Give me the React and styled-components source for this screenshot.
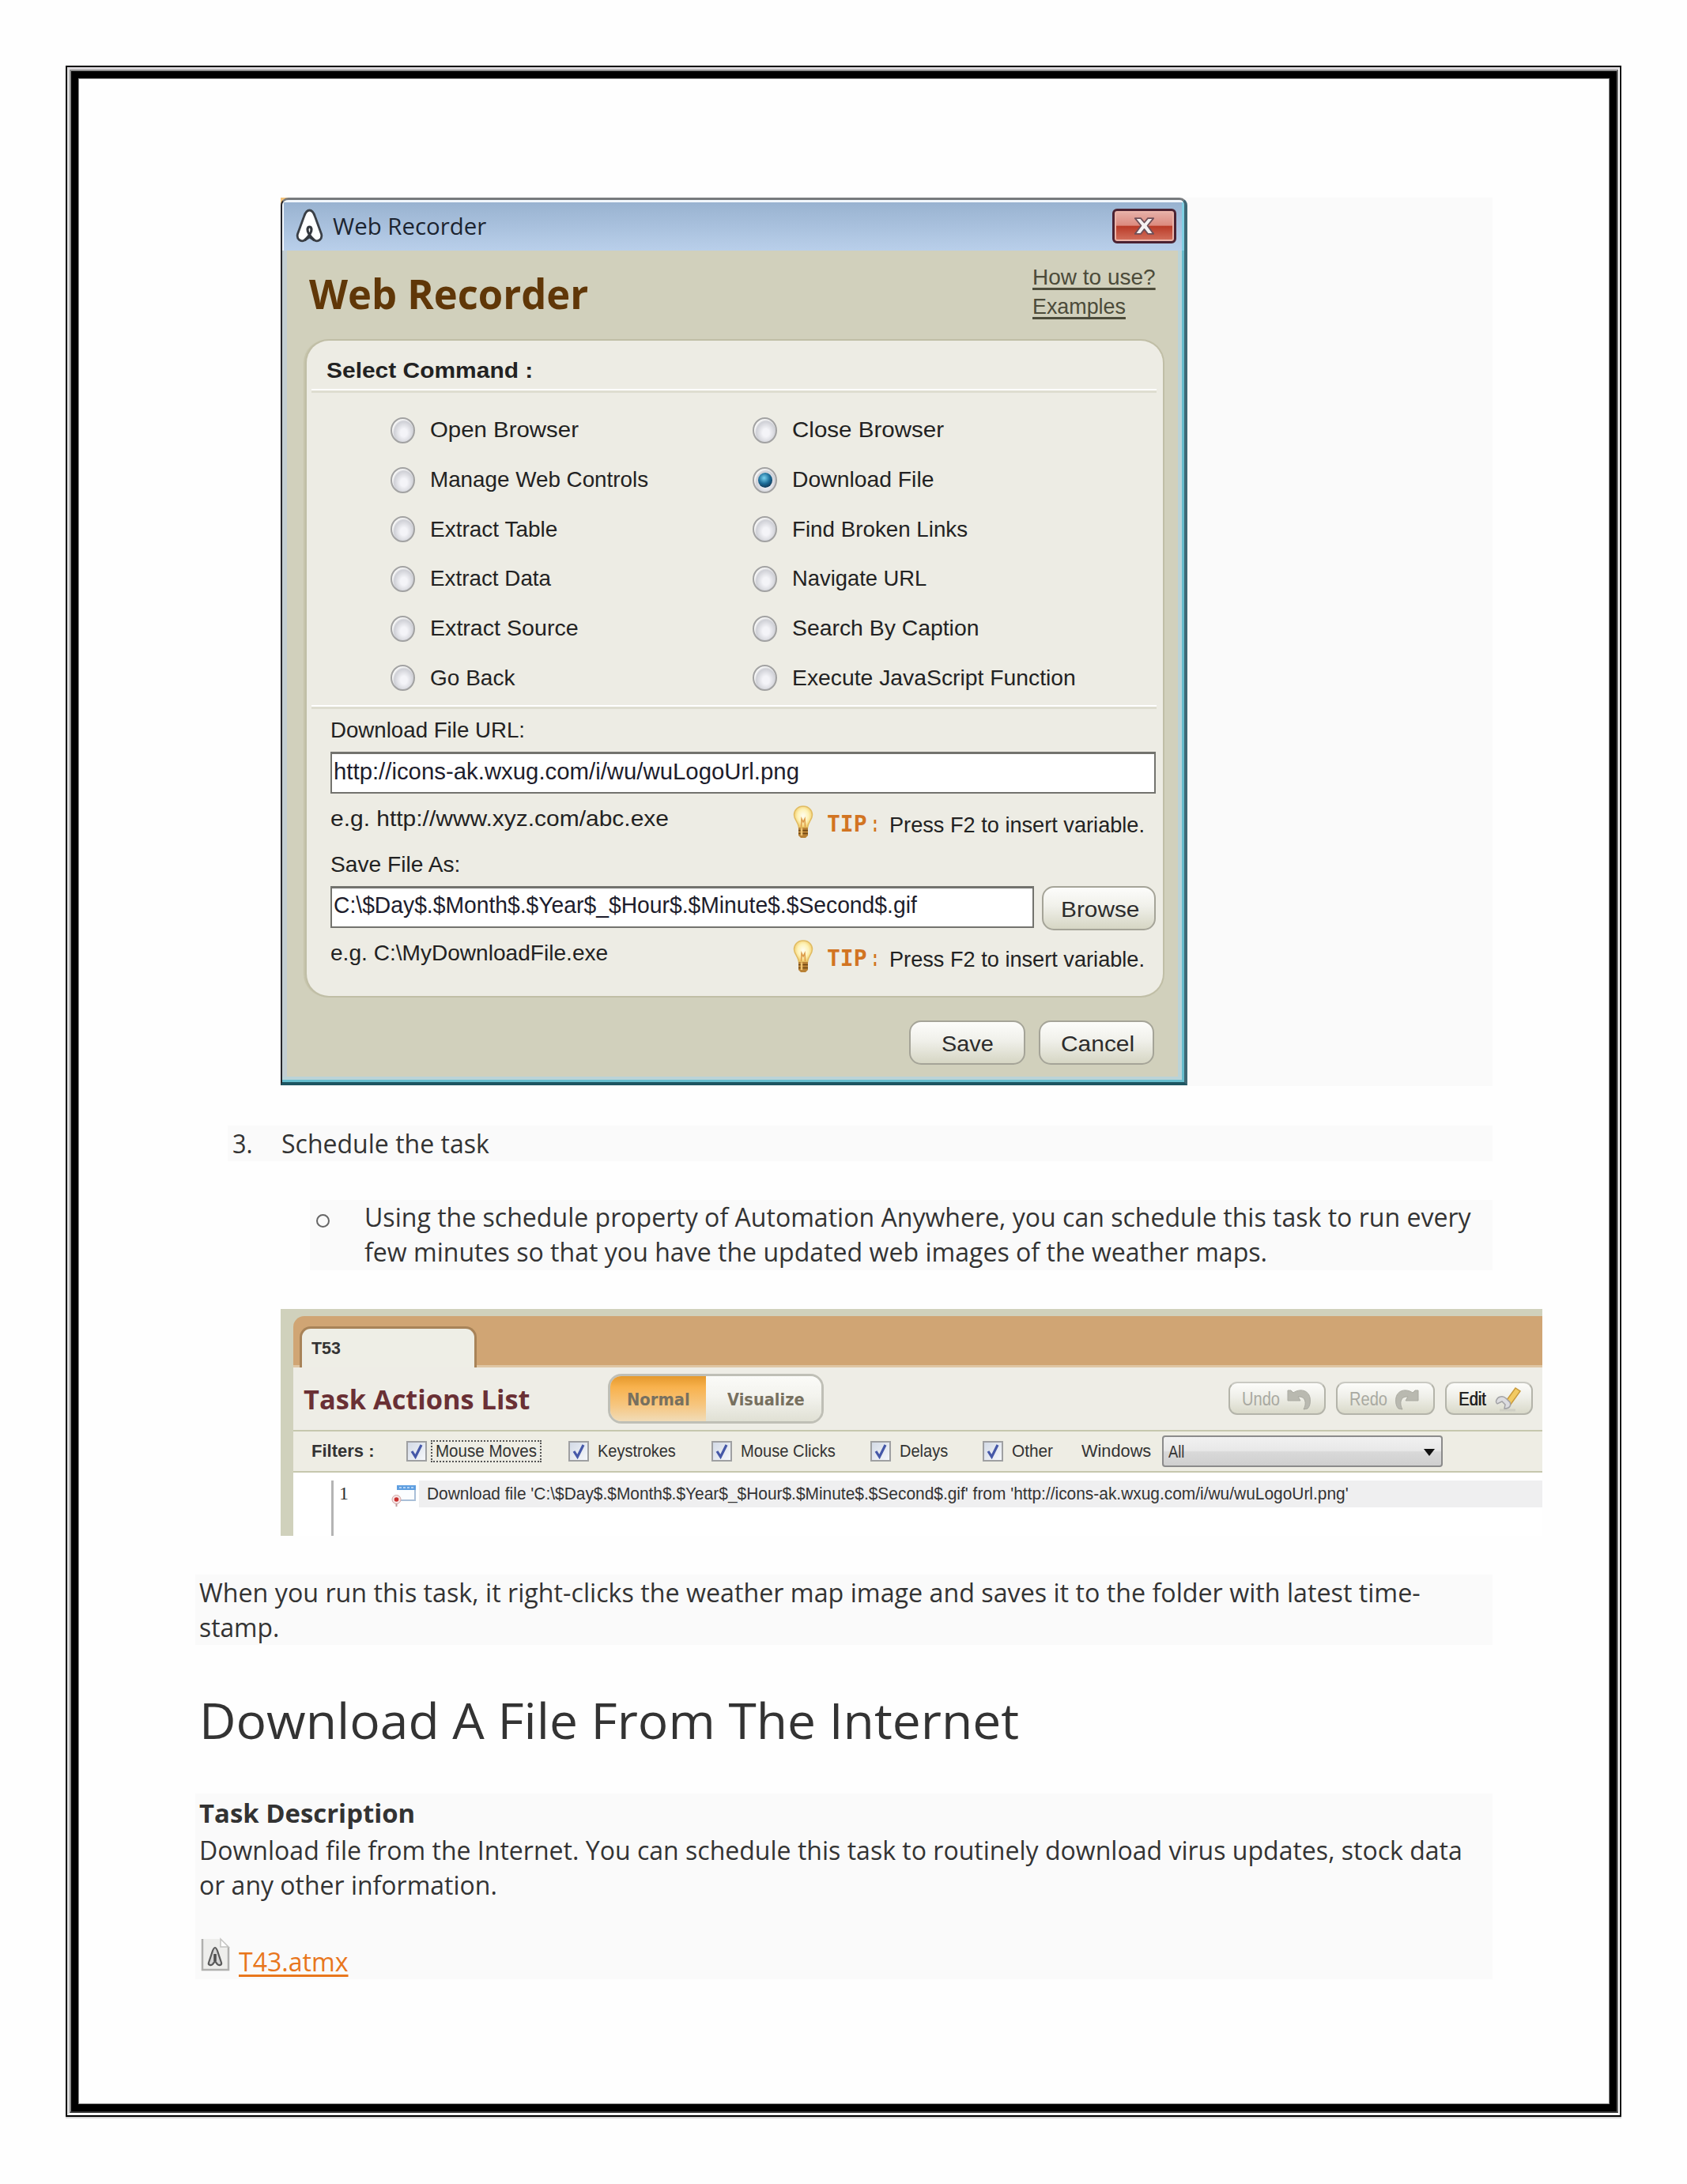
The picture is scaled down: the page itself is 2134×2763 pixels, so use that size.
import React, { useLayoutEffect, useRef, useState } from "react";
import styled, { createGlobalStyle, css } from "styled-components";

const SANS = `"Liberation Sans", Arial, sans-serif`;
const HUMANIST = `"Open Sans", "Noto Sans", sans-serif`;

const Global = createGlobalStyle`
  * { box-sizing: border-box; }
  body { margin: 0; background: #fefefe; }
`;

/* ---------- text that is condensed or widened to a set measure ---------- */

const Measure = styled.span`
  display: block;
  flex: none;
  width: ${(p) => p.$w}px;
  white-space: nowrap;
`;
const Run = styled.span`
  display: inline-block;
  transform-origin: 0 50%;
  ${(p) =>
    p.$underline &&
    css`
      text-decoration: underline;
      text-decoration-thickness: 2.5px;
      text-decoration-skip-ink: none;
      text-underline-offset: 4px;
    `}
`;

function Fit({ w, underline, children }) {
  const ref = useRef(null);
  const [scale, setScale] = useState(1);
  useLayoutEffect(() => {
    setScale(w / ref.current.offsetWidth);
  }, [w, children]);
  return (
    <Measure $w={w}>
      <Run ref={ref} $underline={underline} style={{ transform: `scaleX(${scale})` }}>
        {children}
      </Run>
    </Measure>
  );
}

/* ---------- page ---------- */

const Sheet = styled.div`
  width: 2134px;
  height: 2763px;
  padding: 83px 83px 84px;
  background: #fefefe;
`;
const OuterRule = styled.div`
  height: 2595px;
  border: 2px solid #111;
  border-bottom-color: #000;
  box-shadow: 0 2px 0 #d5d5d5;
`;
const RuleGap = styled.div`
  height: 100%;
  border-style: solid;
  border-width: 3px 2px 3px 3px;
  border-color: #dcd8dc #fff #fff #dedede;
`;
const InnerRule = styled.main`
  height: 100%;
  border: 2px solid #8c8c8c;
  border-right-color: #666;
  border-bottom-color: #333;
  box-shadow: inset 0 0 0 9px #000, inset 0 0 0 10px #8a8a8a;
  padding-top: 160px;
  display: flex;
  flex-direction: column;
  align-items: flex-start;
  font: 33px/44px ${HUMANIST};
  color: #333;
`;

const FigureBand = styled.section`
  width: 1533px;
  height: 1124px;
  margin-left: 265px;
  background: linear-gradient(#f3c27a, #f3c27a) 0 0 / 12px 12px no-repeat #fafafa;
`;
const ListRow = styled.div`
  display: flex;
  width: 1600px;
  height: 45px;
  margin: 50px 0 0 198px;
  padding: 1px 0 0 6px;
  gap: 36px;
  background: #fafafa;
`;
const SubItem = styled.div`
  display: flex;
  width: 1496px;
  height: 89px;
  margin: 49px 0 0 302px;
  padding-left: 8px;
  gap: 44px;
  background: #fafafa;
`;
const Ring = styled.span`
  width: 17px;
  height: 17px;
  margin-top: 18px;
  border: 2px solid #666;
  border-radius: 50%;
`;
const Paragraph = styled.div`
  width: 1641px;
  height: ${(p) => p.$h}px;
  margin: ${(p) => p.$top}px 0 0 157px;
  padding: ${(p) => p.$pad || 0}px 0 0 5px;
  background: #fafafa;
`;
const Heading = styled.h1`
  margin: 55px 0 0 162px;
  font: 400 62px/80px ${HUMANIST};
`;
const Strong = styled.div`
  font-weight: 700;
  margin-bottom: 3px;
`;
const FileRow = styled.div`
  display: flex;
  gap: 11px;
  margin-top: 44px;
  padding-left: 2px;
`;
const FileLink = styled.a`
  margin-top: 9px;
  color: #e8761c;
`;

/* ---------- recorder window ---------- */

const Window = styled.div`
  width: 1147px;
  height: 1123px;
  border-style: solid;
  border-width: 3px 4px 4px 2px;
  border-color: #777a7d #3f6874 #1d5561 #26262c;
  border-radius: 10px 10px 0 0;
  overflow: hidden;
  background: #d1d0bc;
  font: 28px/36px ${SANS};
  color: #222;
`;
const TitleBar = styled.header`
  display: flex;
  height: 64px;
  padding: 11px 10px 0 17px;
  background: linear-gradient(#97b1cf, #b9cfea);
  box-shadow: inset 2px 3px 0 #f2f7fc, inset -3px 0 0 #7fd0e4;
`;
const TitleText = styled.div`
  margin: 4px auto 0 12px;
  font: 30px/36px ${HUMANIST};
  color: #1c2430;
`;
const CloseButton = styled.button`
  display: grid;
  place-items: center;
  width: 81px;
  height: 44px;
  padding: 0;
  border: 3px solid #4b2232;
  border-radius: 6px;
  box-shadow: inset 0 0 0 2px #eab3a8;
  background: linear-gradient(#e6b1aa 0, #dc8a7e 48%, #b93a27 50%, #d4725f 100%);
`;
const WindowBody = styled.div`
  height: 1052px;
  box-shadow: inset -3px -3px 0 #66bdcd, inset 0 -7px 0 #bad3d8, inset -8px 0 0 #bad3d8,
    inset 6px 0 0 #c3ced2;
`;
const Banner = styled.div`
  display: flex;
  justify-content: space-between;
  height: 114px;
  padding: 0 36px 0 34px;
`;
const BannerTitle = styled.div`
  margin-top: 24px;
  font: 700 52px/60px ${HUMANIST};
  color: #603708;
`;
const HelpLinks = styled.nav`
  display: flex;
  flex-direction: column;
  margin-top: 15px;
  line-height: 37px;
`;
const HelpLink = styled.a`
  color: #4c4b3a;
`;
const Panel = styled.section`
  height: 829px;
  margin: 0 27px 0 31px;
  border-radius: 28px;
  background: #edece4;
  box-shadow: 0 0 0 2px #c0bea6, -3px 0 1px 1px #c6c4ab;
`;
const PanelTitle = styled.div`
  height: 61px;
  padding: 18px 0 0 25px;
  font-weight: 700;
  line-height: 40px;
`;
const Divider = styled.div`
  height: 5px;
  margin: ${(p) => p.$top || 0}px 8px 0 6px;
  border-top: 2px solid #fff;
  background: #deddd0;
`;
const Choices = styled.div`
  display: grid;
  grid-template-columns: 458px 1fr;
  grid-auto-rows: 62.7px;
  padding: 16px 0 0 106px;
`;
const Choice = styled.label`
  display: flex;
  align-items: center;
  gap: 19px;
`;
const Radio = styled.span`
  display: grid;
  place-items: center;
  width: 31px;
  height: 33px;
  border: 2px solid #a2a2a2;
  border-radius: 50%;
  background: radial-gradient(ellipse at 55% 60%, #f4f4f8 20%, #cfd0d6 58%, #f6f6f6 68%);
  &::after {
    content: "";
    display: ${(p) => (p.$on ? "block" : "none")};
    width: 18px;
    height: 19px;
    border-radius: 50%;
    background: radial-gradient(circle at 42% 35%, #7ad2f0, #1c6c98 45%, #0e2c48 85%);
  }
`;
const Form = styled.div`
  padding-left: 30px;
`;
const FieldLabel = styled.div`
  height: 36px;
  margin-top: ${(p) => p.$top}px;
`;
const FieldRow = styled.div`
  display: flex;
  gap: 10px;
  margin-top: 9px;
`;
const Field = styled.div`
  width: ${(p) => p.$w}px;
  height: 53px;
  padding: ${(p) => p.$pad}px 0 0 2px;
  border: 2px solid #73736e;
  border-top-width: 3px;
  background: #fff;
  font-size: 30px;
  color: #1d1d2c;
`;
const HintRow = styled.div`
  display: flex;
  height: ${(p) => p.$h}px;
  padding-top: ${(p) => p.$pad}px;
`;
const HintText = styled.div`
  width: 584px;
`;
const Tip = styled.div`
  display: flex;
  align-items: flex-start;
  gap: 16px;
`;
const TipWord = styled.b`
  display: flex;
  gap: 5px;
  margin-top: 7px;
  font: 700 28px/36px "DejaVu Sans Mono", monospace;
  color: #d27422;
`;
const TipText = styled.div`
  margin: 8px 0 0 -3px;
`;
const PushButton = styled.button`
  display: flex;
  align-items: center;
  justify-content: center;
  width: ${(p) => p.$w}px;
  height: 56px;
  padding: 4px ${(p) => p.$nudge || 0}px 0 0;
  border: 2px solid #a5a498;
  border-radius: 15px;
  background: linear-gradient(#fdfdfb, #f0f0ea 45%, #d6d6c4);
  font: 28px/36px ${SANS};
  color: #2c2c2c;
`;
const WindowFooter = styled.footer`
  display: flex;
  justify-content: flex-end;
  gap: 17px;
  padding: 31px 38px 0 0;
`;

/* ---------- task actions view ---------- */

const TaskView = styled.section`
  width: 1596px;
  height: 287px;
  margin: 49px 0 0 265px;
  padding: 9px 0 0 16px;
  background: #d0d1bc;
  font: 22px/28px ${SANS};
  color: #333;
`;
const TabStrip = styled.div`
  height: 65px;
  padding: 13px 0 0 8px;
  border-bottom: 3px solid #dfc6a4;
  border-radius: 14px 0 0 0;
  background: #d0a574;
`;
const Tab = styled.div`
  width: 224px;
  height: 52px;
  padding: 11px 0 0 12px;
  border: 3px solid #a88358;
  border-bottom: 0;
  border-radius: 14px 14px 0 0;
  background: #eeeee6;
  font-weight: 700;
`;
const Toolbar = styled.div`
  display: flex;
  align-items: flex-start;
  height: 81px;
  padding: 8px 12px 0 13px;
  border-bottom: 2px solid #c6c7ae;
  background: #eeede6;
`;
const ViewTitle = styled.div`
  width: 385px;
  margin-top: 12px;
  font: 700 34px/40px ${HUMANIST};
  color: #6a3035;
`;
const Segments = styled.div`
  display: flex;
  width: 273px;
  height: 63px;
  margin-right: auto;
  border: 3px solid #bfbfb6;
  border-radius: 17px;
  overflow: hidden;
`;
const Segment = styled.div`
  display: flex;
  justify-content: center;
  width: ${(p) => p.$w}px;
  padding: 16px 0 0 ${(p) => (p.$on ? 0 : 6)}px;
  font: 700 21px/28px "DejaVu Sans", sans-serif;
  color: #77705f;
  background: ${(p) =>
    p.$on
      ? "linear-gradient(#e5992c, #f8b24e 25%, #f6c680 65%, #f1dcb8)"
      : "linear-gradient(#fbfbf8, #f3f3ee 45%, #e0e0d4)"};
`;
const ToolButton = styled.button`
  display: flex;
  align-items: center;
  gap: 9px;
  width: ${(p) => p.$w}px;
  height: 42px;
  margin: 10px 0 0 13px;
  padding: 2px 0 0 15px;
  border: 2px solid #b4b4aa;
  border-top-color: #c9c9c2;
  border-radius: 11px;
  background: linear-gradient(#fcfcfa, #efefe9 45%, #d9d9c9);
  font: 23px/28px ${SANS};
  color: ${(p) => (p.$dim ? "#a9a9a1" : "#222")};
  ${(p) => !p.$dim && css`text-shadow: 0.6px 0 0 #222;`}
`;
const FilterBar = styled.div`
  display: flex;
  align-items: center;
  height: 52px;
  padding: 0 0 0 23px;
  border-bottom: 2px solid #c6c7ae;
  background: #eeede4;
`;
const FilterTitle = styled.b`
  margin-right: 41px;
`;
const Filter = styled.label`
  display: flex;
  align-items: center;
  gap: ${(p) => (p.$focus ? 5 : 11)}px;
  width: ${(p) => p.$w}px;
`;
const Box = styled.span`
  display: grid;
  place-items: center;
  width: 26px;
  height: 26px;
  border: 2px solid #9fa0a2;
  background: linear-gradient(135deg, #d3dae6, #f6f8fb);
`;
const FilterText = styled.span`
  ${(p) =>
    p.$focus &&
    css`
      padding: 0 4px;
      border: 2px dotted #555;
      line-height: 24px;
    `}
`;
const Select = styled.div`
  display: flex;
  align-items: center;
  justify-content: space-between;
  width: 355px;
  height: 40px;
  margin-left: 14px;
  padding: 2px 8px 0 6px;
  border: 2px solid #8b8b8b;
  border-radius: 4px;
  background: linear-gradient(#f1f1f1, #e8e8e8 48%, #d9d9d9 52%, #cfcfcf);
`;
const Actions = styled.div`
  display: flex;
  height: 80px;
  padding: 10px 0 0 48px;
  background: #fff;
`;
const LineNo = styled.div`
  width: 76px;
  padding: 2px 0 0 7px;
  border-left: 3px solid #b4b4b4;
  font: 24px/28px "Liberation Serif", serif;
`;
const ActionIcon = styled.div`
  width: 35px;
  padding-top: 5px;
`;
const ActionText = styled.div`
  flex: 1;
  height: 34px;
  padding: 3px 0 0 10px;
  background: #efeff0;
`;

/* ---------- drawings ---------- */

const Logo = () => (
  <svg width="35" height="43" viewBox="0 0 35 43" fill="none">
    <path
      d="M17.5 2C13.5 2 12 5.500 10.500 10L2.500 32C0.800 38.500 6.500 42.500 11 40L17.500 36L24 40C28.500 42.500 34.200 38.500 32.500 32L24.500 10C23 5.500 21.500 2 17.500 2Z"
      fill="#fff"
      stroke="#3a3f46"
      strokeWidth="2.800"
    />
    <path
      d="M11.500 40C15 36.500 20.500 31 20 26C19.500 22 15.500 22 15 26C14.500 31 20 36.500 23.500 40"
      stroke="#34383e"
      strokeWidth="3.200"
    />
  </svg>
);

const CloseMark = () => (
  <svg width="27" height="26" viewBox="0 0 30 28">
    <path
      d="M2 3H10L15 9L20 3H28L19.500 13.500L28 25H20L15 18.500L10 25H2L10.500 13.500Z"
      fill="#f5f2f3"
      stroke="#6f5059"
      strokeWidth="2"
      strokeLinejoin="round"
    />
  </svg>
);

const Bulb = () => (
  <svg width="28" height="43" viewBox="0 0 28 43">
    <defs>
      <radialGradient id="glow" cx="50%" cy="45%" r="60%">
        <stop offset="0" stopColor="#fffdf0" />
        <stop offset="0.500" stopColor="#fdf2b8" />
        <stop offset="1" stopColor="#f0c050" />
      </radialGradient>
    </defs>
    <path
      d="M14 2C7 2 2.500 7 2.500 13C2.500 19 8 22 8.500 29H19.500C20 22 25.500 19 25.500 13C25.500 7 21 2 14 2Z"
      fill="url(#glow)"
      stroke="#e0bb62"
      strokeWidth="1.500"
    />
    <path d="M11.500 28L12 18L14 22L16 18L16.500 28" fill="none" stroke="#dc9a4a" strokeWidth="1.500" />
    <path d="M8 29H20V39L17 42H11L8 39Z" fill="#b98236" />
    <path d="M8 32.500H20M8 36.500H20" stroke="#6e4512" strokeWidth="1.500" />
    <path d="M12 29.500V39" stroke="#f0c674" strokeWidth="2.500" />
  </svg>
);

const Check = () => (
  <svg width="18" height="20" viewBox="0 0 18 20">
    <path d="M3 10L7.500 17L15 2" fill="none" stroke="#4558a8" strokeWidth="3.200" />
  </svg>
);

const TurnArrow = ({ flip }) => (
  <svg width="31" height="27" viewBox="0 0 31 27" transform={flip ? "scale(-1 1)" : undefined}>
    <path
      d="M1 2H5L8 5C17 -1 27 2 29 11C30 17 29 22 26 25L21 26C25 19 24 9 14 10L17 15H1Z"
      fill="#b9b9b0"
      stroke="#a9a9a0"
      strokeWidth="1"
    />
  </svg>
);

const Wrench = () => (
  <svg width="36" height="32" viewBox="0 0 36 32">
    <path d="M8 30H28" stroke="#cfcfc4" strokeWidth="3" />
    <path d="M15 20L28 2L34 6L21 24Z" fill="#f2ca62" stroke="#c89a3c" strokeWidth="1.500" />
    <path
      d="M16 15L21 20C23 25 20 28 14 28L15 23L11 19L5 22C2 20 4 14 9 13C12 12 14 13 16 15Z"
      fill="#dcdce0"
      stroke="#a3a3a6"
      strokeWidth="1.500"
    />
  </svg>
);

const DownloadGlyph = () => (
  <svg width="32" height="28" viewBox="0 0 32 28">
    <path d="M8 2H30V20H12" fill="#fbfdff" stroke="#a9bfd8" strokeWidth="2" />
    <path d="M7 1H31V7H7Z" fill="#5f9fe0" />
    <path d="M10 4H28" stroke="#cfe4fa" strokeWidth="1.500" strokeDasharray="3 2" />
    <circle cx="6.500" cy="19" r="5.500" fill="#f6e4e4" stroke="#d0a5a5" />
    <circle cx="6.500" cy="19" r="2.800" fill="#c9302f" />
    <path d="M6.500 24V28" stroke="#c09a9a" strokeWidth="2" />
  </svg>
);

const FileGlyph = () => (
  <svg width="37" height="44" viewBox="0 0 37 44">
    <path d="M2 2H25L35 12V41H2Z" fill="#eeeeec" />
    <path d="M2 2V41H35V12" fill="none" stroke="#b0b0ae" strokeWidth="2.500" />
    <path d="M25 2V12H35Z" fill="#fff" stroke="#c2c2c0" strokeWidth="1.500" />
    <path
      d="M18 13C16 13 15 17 14 20L10 32C9 35 13 36 15 34L18 30L21 34C23 36 27 35 26 32L22 20C21 17 20 13 18 13Z"
      fill="#d5d5d5"
      stroke="#5a5a5a"
      strokeWidth="2.200"
    />
    <path d="M18 21V30" stroke="#4c4c4c" strokeWidth="3.500" />
  </svg>
);

/* ---------- content ---------- */

const choices = [
  ["Open Browser", 188],
  ["Close Browser", 192],
  ["Manage Web Controls", 276],
  ["Download File", 179],
  ["Extract Table", 161],
  ["Find Broken Links", 222],
  ["Extract Data", 153],
  ["Navigate URL", 170],
  ["Extract Source", 188],
  ["Search By Caption", 236],
  ["Go Back", 107],
  ["Execute JavaScript Function", 359],
];

const filters = [
  ["Mouse Moves", 205, 128],
  ["Keystrokes", 181, 99],
  ["Mouse Clicks", 201, 120],
  ["Delays", 142, 61],
  ["Other", 125, 52],
];

const TipLine = () => (
  <Tip>
    <Bulb />
    <TipWord>
      <Fit w={51}>TIP</Fit>
      <Fit w={10}>:</Fit>
    </TipWord>
    <TipText><Fit w={323}>Press F2 to insert variable.</Fit></TipText>
  </Tip>
);

const RecorderWindow = () => (
  <Window>
    <TitleBar>
      <Logo />
      <TitleText><Fit w={194}>Web Recorder</Fit></TitleText>
      <CloseButton><CloseMark /></CloseButton>
    </TitleBar>
    <WindowBody>
      <Banner>
        <BannerTitle><Fit w={353}>Web Recorder</Fit></BannerTitle>
        <HelpLinks>
          <HelpLink><Fit w={156} underline>How to use?</Fit></HelpLink>
          <HelpLink><Fit w={118} underline>Examples</Fit></HelpLink>
        </HelpLinks>
      </Banner>
      <Panel>
        <PanelTitle><Fit w={261}>Select Command :</Fit></PanelTitle>
        <Divider />
        <Choices>
          {choices.map(([name, w]) => (
            <Choice key={name}>
              <Radio $on={name === "Download File"} />
              <Fit w={w}>{name}</Fit>
            </Choice>
          ))}
        </Choices>
        <Divider $top={3} />
        <Form>
          <FieldLabel $top={9}><Fit w={246}>Download File URL:</Fit></FieldLabel>
          <FieldRow>
            <Field $w={1044} $pad={4}>
              <Fit w={589}>http://icons-ak.wxug.com/i/wu/wuLogoUrl.png</Fit>
            </Field>
          </FieldRow>
          <HintRow $h={72} $pad={14}>
            <HintText><Fit w={428}>e.g. http://www.xyz.com/abc.exe</Fit></HintText>
            <TipLine />
          </HintRow>
          <FieldLabel $top={0}><Fit w={164}>Save File As:</Fit></FieldLabel>
          <FieldRow>
            <Field $w={890} $pad={3}>
              <Fit w={738}>C:\$Day$.$Month$.$Year$_$Hour$.$Minute$.$Second$.gif</Fit>
            </Field>
            <PushButton $w={144} $nudge={2}><Fit w={99}>Browse</Fit></PushButton>
          </FieldRow>
          <HintRow $h={60} $pad={11}>
            <HintText><Fit w={351}>e.g. C:\MyDownloadFile.exe</Fit></HintText>
            <TipLine />
          </HintRow>
        </Form>
      </Panel>
      <WindowFooter>
        <PushButton $w={147} $nudge={2}><Fit w={66}>Save</Fit></PushButton>
        <PushButton $w={146} $nudge={3}><Fit w={93}>Cancel</Fit></PushButton>
      </WindowFooter>
    </WindowBody>
  </Window>
);

const TaskActions = () => (
  <TaskView>
    <TabStrip>
      <Tab><Fit w={37}>T53</Fit></Tab>
    </TabStrip>
    <Toolbar>
      <ViewTitle><Fit w={287}>Task Actions List</Fit></ViewTitle>
      <Segments>
        <Segment $w={121} $on><Fit w={80}>Normal</Fit></Segment>
        <Segment $w={146}><Fit w={98}>Visualize</Fit></Segment>
      </Segments>
      <ToolButton $w={123} $dim><Fit w={48}>Undo</Fit><TurnArrow /></ToolButton>
      <ToolButton $w={125} $dim><Fit w={48}>Redo</Fit><TurnArrow flip /></ToolButton>
      <ToolButton $w={111}><Fit w={35}>Edit</Fit><Wrench /></ToolButton>
    </Toolbar>
    <FilterBar>
      <FilterTitle><Fit w={79}>Filters :</Fit></FilterTitle>
      {filters.map(([name, w, tw], i) => (
        <Filter key={name} $w={w} $focus={i === 0}>
          <Box><Check /></Box>
          <FilterText $focus={i === 0}><Fit w={tw}>{name}</Fit></FilterText>
        </Filter>
      ))}
      <Fit w={88}>Windows</Fit>
      <Select>
        <Fit w={20}>All</Fit>
        <svg width="14" height="9" viewBox="0 0 14 9"><path d="M0 0H14L7 9Z" fill="#111" /></svg>
      </Select>
    </FilterBar>
    <Actions>
      <LineNo>1</LineNo>
      <ActionIcon><DownloadGlyph /></ActionIcon>
      <ActionText>
        <Fit w={1166}>
          {"Download file 'C:\\$Day$.$Month$.$Year$_$Hour$.$Minute$.$Second$.gif' from 'http://icons-ak.wxug.com/i/wu/wuLogoUrl.png'"}
        </Fit>
      </ActionText>
    </Actions>
  </TaskView>
);

export default function App() {
  return (
    <Sheet>
      <Global />
      <OuterRule>
        <RuleGap>
          <InnerRule>
            <FigureBand><RecorderWindow /></FigureBand>
            <ListRow>
              <Fit w={26}>3.</Fit>
              <Fit w={263}>Schedule the task</Fit>
            </ListRow>
            <SubItem>
              <Ring />
              <div>
                <Fit w={1400}>
                  Using the schedule property of Automation Anywhere, you can schedule this task to run every
                </Fit>
                <Fit w={1142}>few minutes so that you have the updated web images of the weather maps.</Fit>
              </div>
            </SubItem>
            <TaskActions />
            <Paragraph $h={89} $top={49} $pad={1}>
              <Fit w={1545}>
                When you run this task, it right-clicks the weather map image and saves it to the folder with latest time-
              </Fit>
              <Fit w={101}>stamp.</Fit>
            </Paragraph>
            <Heading><Fit w={1037}>Download A File From The Internet</Fit></Heading>
            <Paragraph $h={235} $top={53} $pad={3}>
              <Strong><Fit w={273}>Task Description</Fit></Strong>
              <Fit w={1598}>
                Download file from the Internet. You can schedule this task to routinely download virus updates, stock data
              </Fit>
              <Fit w={377}>or any other information.</Fit>
              <FileRow>
                <FileGlyph />
                <FileLink><Fit w={139} underline>T43.atmx</Fit></FileLink>
              </FileRow>
            </Paragraph>
          </InnerRule>
        </RuleGap>
      </OuterRule>
    </Sheet>
  );
}
